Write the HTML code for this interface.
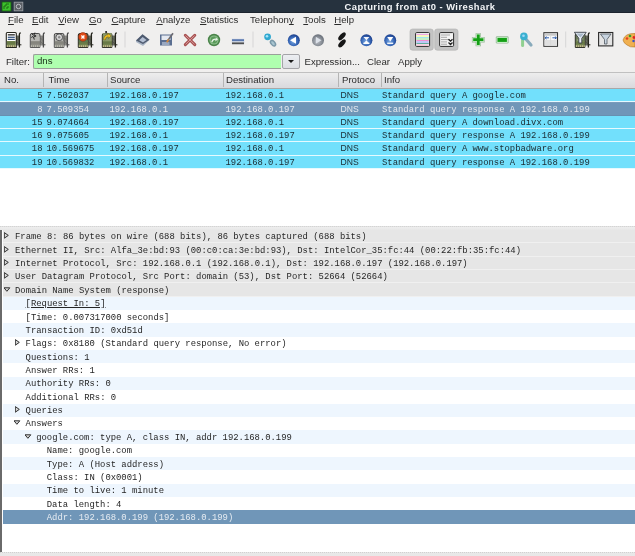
<!DOCTYPE html><html><head><meta charset="utf-8"><style>
*{margin:0;padding:0;box-sizing:border-box}
html,body{width:635px;height:556px;overflow:hidden;background:#f0efee;position:relative}
body{will-change:transform;font-family:"Liberation Sans",sans-serif;color:#2e2e2e}
.a{position:absolute;white-space:pre}
#title{left:0;top:0;width:635px;height:12.8px;background:#26323e;border-bottom:1px solid #1c242e}
#ttext{left:344.5px;top:1px;font-weight:bold;font-size:9.4px;letter-spacing:0.45px;color:#f4f6f8;line-height:11px}
.menu{top:13.8px;font-size:9.6px;line-height:11px;color:#2c2c2c}
.menu u{text-decoration:underline;text-underline-offset:0.5px;text-decoration-skip-ink:none}
.sep{width:1px;background:#d4d4d4;top:32px;height:16px}
.flt{font-size:9.6px;line-height:11px;color:#2c2c2c;top:56px}
#inp{left:33px;top:53.5px;width:248px;height:15.5px;background:#afffaf;border:1px solid #9aa09a;border-right:none;border-radius:2px 0 0 2px}
#drop{left:282px;top:53.8px;width:17.6px;height:15.4px;background:linear-gradient(#eceef2,#dcdee2);border:1px solid #a4a4a8;border-radius:2px}
#hdr{left:0;top:72px;width:635px;height:16.9px;background:linear-gradient(#ededed,#d9d9dd);border-top:1px solid #c0c0c0;border-bottom:1px solid #a8a8a8}
.hd{top:73.5px;font-size:9.6px;line-height:11px;color:#2c2c2c}
.hsep{top:73px;width:1px;height:14px;background:#b4b4b4}
#list{left:0;top:88.9px;width:635px;height:139px;background:#ffffff}
.prow{position:absolute;left:0;width:635px;height:13.33px;background:#72e0fc;border-bottom:1px solid #e6faff}
.prow.sel{background:#7096b8;color:#e4e8ee;border-top:1px solid #7a9cbc;border-bottom:1px solid #6890b0}
.m{font-family:"Liberation Mono",monospace;font-size:8.9px;line-height:13px;position:absolute;top:1px;white-space:pre;color:#1a2a30}
.sel .m{color:#e6eaf0}
#split1{left:0;top:226px;width:635px;height:4.5px;background:linear-gradient(#eeeeee,#e8e8e8 70%,#dedede);border-top:1px dotted #d4d4d4}
#det{left:0;top:230px;width:635px;height:322px;background:#fff;border-left:2px solid #6a6a6a}
.drow{position:absolute;left:1px;width:632px;height:13.36px}
.g{background:#e6e6e6;border-bottom:1px solid #f0f0f0}
.lb{background:#eef6fe}
.w{background:#ffffff}
.dsel{background:#7096b8}
.dt{font-family:"Liberation Mono",monospace;font-size:8.9px;line-height:13px;position:absolute;top:1.5px;white-space:pre;color:#262626}
.dsel .dt{color:#e6ecf2}
.tri{position:absolute}
#split2{left:0;top:552px;width:635px;height:4px;background:#e8e8e8;border-top:1px dotted #d0d0d0}
</style></head><body>
<div class="a" id="title"></div>
<svg class="a" style="left:0;top:0" width="26" height="13" viewBox="0 0 26 13"><rect x="2" y="2" width="9" height="9" fill="#3cc02c" stroke="#1a5a12" stroke-width="0.8"/><path d="M4 9 L4 6 L6 6 L6 4 L9 4 M7 9 L7 7 L9 7" stroke="#1e6a14" stroke-width="1" fill="none"/><rect x="14.2" y="2.2" width="8.6" height="8.6" fill="#5a5e64" stroke="#9a9ea4" stroke-width="0.9"/><circle cx="18.5" cy="6.5" r="2.2" fill="none" stroke="#c8ccd2" stroke-width="0.9"/></svg>
<div class="a" id="ttext">Capturing from at0 - Wireshark</div>
<div class="a menu" style="left:8px"><u>F</u>ile</div>
<div class="a menu" style="left:32px"><u>E</u>dit</div>
<div class="a menu" style="left:58.3px"><u>V</u>iew</div>
<div class="a menu" style="left:89px"><u>G</u>o</div>
<div class="a menu" style="left:111.4px"><u>C</u>apture</div>
<div class="a menu" style="left:156.3px"><u>A</u>nalyze</div>
<div class="a menu" style="left:200px"><u>S</u>tatistics</div>
<div class="a menu" style="left:250px">Telephon<u>y</u></div>
<div class="a menu" style="left:303.3px"><u>T</u>ools</div>
<div class="a menu" style="left:334.3px"><u>H</u>elp</div>
<svg class="a" style="left:0;top:26px" width="635" height="28" viewBox="0 26 635 28"><rect x="15.7" y="35.5" width="3.4" height="10" fill="#666a5e"/>
<path d="M16.5 38 L18.9 40.5 M16.5 41.5 L18.9 44" stroke="#4a4e40" stroke-width="0.7"/>
<path d="M19.4 47.6 V34 Q19.4 33 20.8 32.8" fill="none" stroke="#26261e" stroke-width="1.3"/>
<path d="M18.8 44.8 H21.4" stroke="#26261e" stroke-width="1"/>
<path d="M6.3 47.4 V33.6 Q6.3 32.5 7.4 32.5 H15.2 Q16.3 32.5 16.3 33.6 V47.4 Z" fill="#ffffff" stroke="#26261e" stroke-width="1.1"/>
<rect x="6.85" y="41" width="8.9" height="6" fill="#72844e"/>
<rect x="6.85" y="45.3" width="8.9" height="1.6" fill="#c8c490"/>
<rect x="8.0" y="45.3" width="0.8" height="1.6" fill="#26261e" opacity="0.5"/>
<rect x="10.1" y="45.3" width="0.8" height="1.6" fill="#26261e" opacity="0.5"/>
<rect x="12.2" y="45.3" width="0.8" height="1.6" fill="#26261e" opacity="0.5"/>
<rect x="14.3" y="45.3" width="0.8" height="1.6" fill="#26261e" opacity="0.5"/>
<rect x="6.85" y="42.6" width="8.9" height="0.7" fill="#26261e" opacity="0.3"/>
<rect x="7.8" y="34" width="7" height="1.6" fill="#505050"/>
<rect x="7.8" y="36.7" width="7" height="1.1" fill="#1a3a6a"/>
<rect x="7.8" y="38.8" width="7" height="1.1" fill="#1a3a6a"/>
<rect x="39.7" y="35.5" width="3.4" height="10" fill="#8a8a86"/>
<path d="M40.5 38 L42.9 40.5 M40.5 41.5 L42.9 44" stroke="#6a6a66" stroke-width="0.7"/>
<path d="M43.4 47.6 V34 Q43.4 33 44.8 32.8" fill="none" stroke="#4a4a4a" stroke-width="1.3"/>
<path d="M42.8 44.8 H45.4" stroke="#4a4a4a" stroke-width="1"/>
<path d="M30.3 47.4 V35 Q30.3 33.5 31.8 33.5 H38.8 Q39.9 33.5 39.9 35 V47.4 Z" fill="#b8b8b4" stroke="#4a4a4a" stroke-width="1"/>
<rect x="30.85" y="41" width="8.9" height="6" fill="#8e8e86"/>
<rect x="30.85" y="45.3" width="8.9" height="1.6" fill="#c0c0b4"/>
<rect x="32.0" y="45.3" width="0.8" height="1.6" fill="#4a4a4a" opacity="0.5"/>
<rect x="34.1" y="45.3" width="0.8" height="1.6" fill="#4a4a4a" opacity="0.5"/>
<rect x="36.2" y="45.3" width="0.8" height="1.6" fill="#4a4a4a" opacity="0.5"/>
<rect x="38.3" y="45.3" width="0.8" height="1.6" fill="#4a4a4a" opacity="0.5"/>
<rect x="30.85" y="42.6" width="8.9" height="0.7" fill="#4a4a4a" opacity="0.3"/>
<rect x="30.85" y="36.5" width="8.9" height="4.5" fill="#b8b8b4"/>
<path d="M31.5 33.4 L33.7 35.6 M34.9 32.6 L33.9 35 L36.1 36 L33.5 37 L34.3 39.6 M31.3 37.5 L33.1 36.3" fill="none" stroke="#2a2a2a" stroke-width="1"/>
<rect x="63.699999999999996" y="35.5" width="3.4" height="10" fill="#8a8a86"/>
<path d="M64.5 38 L66.89999999999999 40.5 M64.5 41.5 L66.89999999999999 44" stroke="#6a6a66" stroke-width="0.7"/>
<path d="M67.4 47.6 V34 Q67.4 33 68.8 32.8" fill="none" stroke="#4a4a4a" stroke-width="1.3"/>
<path d="M66.8 44.8 H69.4" stroke="#4a4a4a" stroke-width="1"/>
<path d="M54.3 47.4 V35 Q54.3 33.5 55.8 33.5 H62.8 Q63.9 33.5 63.9 35 V47.4 Z" fill="#b8b8b4" stroke="#4a4a4a" stroke-width="1"/>
<rect x="54.849999999999994" y="41" width="8.9" height="6" fill="#8e8e86"/>
<rect x="54.849999999999994" y="45.3" width="8.9" height="1.6" fill="#c0c0b4"/>
<rect x="56.0" y="45.3" width="0.8" height="1.6" fill="#4a4a4a" opacity="0.5"/>
<rect x="58.1" y="45.3" width="0.8" height="1.6" fill="#4a4a4a" opacity="0.5"/>
<rect x="60.2" y="45.3" width="0.8" height="1.6" fill="#4a4a4a" opacity="0.5"/>
<rect x="62.3" y="45.3" width="0.8" height="1.6" fill="#4a4a4a" opacity="0.5"/>
<rect x="54.849999999999994" y="42.6" width="8.9" height="0.7" fill="#4a4a4a" opacity="0.3"/>
<circle cx="59.199999999999996" cy="37.3" r="3.4" fill="#d4d4d4" stroke="#4a4a4a" stroke-width="0.9"/>
<circle cx="59.199999999999996" cy="37.3" r="1.2" fill="#8a8a8a"/>
<rect x="87.7" y="35.5" width="3.4" height="10" fill="#666a5e"/>
<path d="M88.5 38 L90.89999999999999 40.5 M88.5 41.5 L90.89999999999999 44" stroke="#4a4e40" stroke-width="0.7"/>
<path d="M91.4 47.6 V34 Q91.4 33 92.8 32.8" fill="none" stroke="#26261e" stroke-width="1.3"/>
<path d="M90.8 44.8 H93.4" stroke="#26261e" stroke-width="1"/>
<path d="M78.3 47.4 V35 Q78.3 33.5 79.8 33.5 H86.8 Q87.89999999999999 33.5 87.89999999999999 35 V47.4 Z" fill="#7a8a60" stroke="#26261e" stroke-width="1"/>
<rect x="78.85" y="41" width="8.9" height="6" fill="#72844e"/>
<rect x="78.85" y="45.3" width="8.9" height="1.6" fill="#c8c490"/>
<rect x="80.0" y="45.3" width="0.8" height="1.6" fill="#26261e" opacity="0.5"/>
<rect x="82.1" y="45.3" width="0.8" height="1.6" fill="#26261e" opacity="0.5"/>
<rect x="84.2" y="45.3" width="0.8" height="1.6" fill="#26261e" opacity="0.5"/>
<rect x="86.3" y="45.3" width="0.8" height="1.6" fill="#26261e" opacity="0.5"/>
<rect x="78.85" y="42.6" width="8.9" height="0.7" fill="#26261e" opacity="0.3"/>
<rect x="78.85" y="40" width="8.9" height="2" fill="#5a7a50"/>
<circle cx="82.89999999999999" cy="36.9" r="4.3" fill="#e04c18" stroke="#8a2a10" stroke-width="0.6"/>
<path d="M81.39999999999999 35.4 L84.39999999999999 38.4 M84.39999999999999 35.4 L81.39999999999999 38.4" stroke="#ffffff" stroke-width="1.4"/>
<rect x="111.7" y="35.5" width="3.4" height="10" fill="#666a5e"/>
<path d="M112.5 38 L114.89999999999999 40.5 M112.5 41.5 L114.89999999999999 44" stroke="#4a4e40" stroke-width="0.7"/>
<path d="M115.4 47.6 V34 Q115.4 33 116.8 32.8" fill="none" stroke="#26261e" stroke-width="1.3"/>
<path d="M114.8 44.8 H117.4" stroke="#26261e" stroke-width="1"/>
<path d="M102.3 47.4 V35 Q102.3 33.5 103.8 33.5 H110.8 Q111.89999999999999 33.5 111.89999999999999 35 V47.4 Z" fill="#7a8a60" stroke="#26261e" stroke-width="1"/>
<rect x="102.85" y="41" width="8.9" height="6" fill="#72844e"/>
<rect x="102.85" y="45.3" width="8.9" height="1.6" fill="#c8c490"/>
<rect x="104.0" y="45.3" width="0.8" height="1.6" fill="#26261e" opacity="0.5"/>
<rect x="106.1" y="45.3" width="0.8" height="1.6" fill="#26261e" opacity="0.5"/>
<rect x="108.2" y="45.3" width="0.8" height="1.6" fill="#26261e" opacity="0.5"/>
<rect x="110.3" y="45.3" width="0.8" height="1.6" fill="#26261e" opacity="0.5"/>
<rect x="102.85" y="42.6" width="8.9" height="0.7" fill="#26261e" opacity="0.3"/>
<rect x="102.85" y="33.1" width="8.9" height="7.9" fill="#8a9868"/>
<path d="M103.5 39.5 Q104.3 34.5 108.1 34.8 L107.5 33 L111.1 35.8 L108.5 38.6 L108.3 36.8 Q105.8 36.5 105.3 40 Z" fill="#f0c020" stroke="#6a5a18" stroke-width="0.5"/>
<rect x="105.3" y="31" width="1.6" height="2.2" fill="#222"/>
<rect x="124.5" y="31.5" width="1" height="16" fill="#d6d6d6"/>
<rect x="252.5" y="31.5" width="1" height="16" fill="#d6d6d6"/>
<rect x="565.2" y="31.5" width="1" height="16" fill="#d6d6d6"/>
<g><path d="M136 40.5 L142.5 34.2 L149.5 39.8 L143 46 L136 42 Z" fill="#a8b4c4"/><path d="M136 40.5 L142.5 34.2 L149.5 39.8 L143 44 Z" fill="#4e5a6e"/><path d="M139.2 40.3 L142.6 37 L146.6 39.9 L143 42.4 Z" fill="#b4c0d4"/></g>
<g><rect x="160" y="34.5" width="12" height="11" fill="#5a6e90"/><rect x="161.5" y="35.5" width="9" height="4.5" fill="#e4e8f0"/><rect x="162" y="42" width="7.5" height="3" fill="#9aa8c0"/><path d="M173 33.2 L167.5 41" stroke="#6a6a70" stroke-width="1.6"/><path d="M168.6 39.6 L166.8 42.3" stroke="#d08840" stroke-width="1.8"/></g>
<g><path d="M185.3 35.3 L194.8 44.6 M194.8 35.3 L185.3 44.6" stroke="#a85050" stroke-width="3" stroke-linecap="round"/><path d="M185.8 35.8 L194.3 44.1 M194.3 35.8 L185.8 44.1" stroke="#d49a9a" stroke-width="1" stroke-linecap="round"/></g>
<circle cx="214" cy="40" r="6.2" fill="#4a844a"/><circle cx="214" cy="40" r="4.6" fill="#8cc08c"/><circle cx="214" cy="40" r="3.4" fill="#5a9a5a"/><path d="M211.2 42 Q212.2 38.2 216.2 38.6 L215.6 37 L218 39.6 L215 41.4 L215.6 39.9 Q213.2 39.6 212.3 42.4 Z" fill="#e8f4e8"/>
<rect x="231.5" y="38.6" width="13" height="6" rx="1" fill="#dde2ea"/><rect x="232" y="39.2" width="12" height="2" fill="#5a78b0"/><rect x="232" y="42.4" width="12" height="1.8" fill="#505050"/>
<defs><radialGradient id="gb" cx="0.45" cy="0.6" r="0.6"><stop offset="0" stop-color="#7aa8e0"/><stop offset="0.6" stop-color="#3868b8"/><stop offset="1" stop-color="#1a3c88"/></radialGradient><radialGradient id="gg" cx="0.45" cy="0.6" r="0.6"><stop offset="0" stop-color="#b8bcc4"/><stop offset="0.6" stop-color="#8a9098"/><stop offset="1" stop-color="#686e78"/></radialGradient></defs>
<ellipse cx="273" cy="43.2" rx="2.6" ry="4" transform="rotate(-40 273 43.2)" fill="#7a98a8"/><ellipse cx="273" cy="43.2" rx="1.2" ry="2.4" transform="rotate(-40 273 43.2)" fill="#a8c4d0"/><circle cx="267.6" cy="36.8" r="3.4" fill="#30a8d0"/><circle cx="267" cy="36.2" r="1.3" fill="#a8e4f8"/>
<circle cx="293.8" cy="40.3" r="6" fill="url(#gb)"/><path d="M290 40.3 L296 36.8 L296 43.8 Z" fill="#ffffff"/>
<circle cx="318" cy="40.3" r="6" fill="url(#gg)"/><path d="M321.5 40.3 L315.8 36.8 L315.8 43.8 Z" fill="#dde2ea"/>
<ellipse cx="342" cy="36.3" rx="4.9" ry="2.3" transform="rotate(-48 342 36.3)" fill="#161616"/><ellipse cx="342" cy="43.4" rx="4.9" ry="2.3" transform="rotate(-48 342 43.4)" fill="#161616"/>
<circle cx="366.4" cy="40.3" r="6" fill="url(#gb)"/><path d="M363.4 37 H369.4 L366.4 40.3 Z M363.4 43.8 H369.4 L366.4 40.3 Z" fill="#ffffff" opacity="0.95"/><rect x="363.4" y="42.6" width="6" height="1.3" fill="#ffffff"/>
<circle cx="390.2" cy="40.3" r="6" fill="url(#gb)"/><path d="M387.2 37 H393.2 L390.2 41.5 Z" fill="#ffffff"/><rect x="387.2" y="42.6" width="6" height="1.3" fill="#ffffff"/>
<rect x="410" y="29" width="23.3" height="21.2" rx="2.5" fill="#c4c4c4" stroke="#b0b0b0" stroke-width="0.6"/>
<rect x="434.7" y="29" width="23.3" height="21.2" rx="2.5" fill="#c4c4c4" stroke="#b0b0b0" stroke-width="0.6"/>
<rect x="415.6" y="32.6" width="14" height="13.8" rx="1" fill="#ffffff" stroke="#2a2a2a" stroke-width="1"/>
<rect x="416.4" y="34.0" width="12.4" height="1" fill="#f0a8e8"/>
<rect x="416.4" y="35.5" width="12.4" height="1" fill="#f0f080"/>
<rect x="416.4" y="37.0" width="12.4" height="1" fill="#a0e8f0"/>
<rect x="416.4" y="38.5" width="12.4" height="1" fill="#90e090"/>
<rect x="416.4" y="40.0" width="12.4" height="1" fill="#f090d0"/>
<rect x="416.4" y="41.5" width="12.4" height="1" fill="#8090f0"/>
<rect x="416.4" y="43.0" width="12.4" height="1" fill="#60b0a0"/>
<rect x="416.4" y="44.5" width="12.4" height="1" fill="#f0a8c0"/>
<rect x="439.6" y="32.6" width="14" height="13.8" rx="1" fill="#f4f4f4" stroke="#2a2a2a" stroke-width="1"/>
<rect x="441" y="34.5" width="9" height="1" fill="#a8a8a8"/><rect x="441" y="36.8" width="6" height="1" fill="#a8a8a8"/><rect x="441" y="39.1" width="9" height="1" fill="#a8a8a8"/><rect x="441" y="41.4" width="6" height="1" fill="#a8a8a8"/><rect x="441" y="43.7" width="6" height="1" fill="#a8a8a8"/>
<path d="M448.5 39.2 L450.5 41.2 L452.5 39.2 M448.5 42.5 L450.5 44.5 L452.5 42.5" fill="none" stroke="#222" stroke-width="1.3"/>
<path d="M478.3 33.3 V46.2 M471.9 39.7 H484.7" stroke="#98b898" stroke-width="5.4"/><path d="M478.3 33.8 V45.7 M472.4 39.7 H484.2" stroke="#c8ecc8" stroke-width="4.2"/><path d="M478.3 34.6 V44.9 M473.2 39.7 H483.4" stroke="#14a014" stroke-width="2.8"/>
<rect x="495.8" y="36.2" width="12.8" height="7.4" rx="1.4" fill="#98b898"/><rect x="496.5" y="36.9" width="11.4" height="6" rx="1" fill="#c8ecc8"/><rect x="497.5" y="37.9" width="9.4" height="4" fill="#14a014"/>
<path d="M524.5 37.5 L531 45" stroke="#88aabb" stroke-width="3.2" stroke-linecap="round"/><path d="M522.6 39.5 L522.6 45.5" stroke="#90d090" stroke-width="3" stroke-linecap="round"/><circle cx="523.9" cy="36.4" r="3.8" fill="#3ab0d0"/><circle cx="523.5" cy="35.8" r="1.3" fill="#a0d8f8"/>
<rect x="543.9" y="32.7" width="13.6" height="13.6" fill="#fafafa" stroke="#333" stroke-width="1.1"/><rect x="544.5" y="33.3" width="12.4" height="2.4" fill="#c8c8c8"/><rect x="544.5" y="40" width="12.4" height="5.8" fill="#e0e0e0"/><path d="M545 37.8 H549 M556.4 37.8 H552.4 M546.5 36.6 L545 37.8 L546.5 39 M554.9 36.6 L556.4 37.8 L554.9 39" stroke="#3060b0" stroke-width="1" fill="none"/><path d="M550.7 36 V46" stroke="#d8d8d8" stroke-width="1"/>
<rect x="584.6999999999999" y="35.5" width="3.4" height="10" fill="#666a5e"/>
<path d="M585.5 38 L587.9 40.5 M585.5 41.5 L587.9 44" stroke="#4a4e40" stroke-width="0.7"/>
<path d="M588.4 47.6 V34 Q588.4 33 589.8 32.8" fill="none" stroke="#26261e" stroke-width="1.3"/>
<path d="M587.8 44.8 H590.4" stroke="#26261e" stroke-width="1"/>
<path d="M575.3 47.4 V35 Q575.3 33.5 576.8 33.5 H583.8 Q584.9 33.5 584.9 35 V47.4 Z" fill="#7a8a60" stroke="#26261e" stroke-width="1"/>
<rect x="575.8499999999999" y="41" width="8.9" height="6" fill="#72844e"/>
<rect x="575.8499999999999" y="45.3" width="8.9" height="1.6" fill="#c8c490"/>
<rect x="577.0" y="45.3" width="0.8" height="1.6" fill="#26261e" opacity="0.5"/>
<rect x="579.1" y="45.3" width="0.8" height="1.6" fill="#26261e" opacity="0.5"/>
<rect x="581.2" y="45.3" width="0.8" height="1.6" fill="#26261e" opacity="0.5"/>
<rect x="583.3" y="45.3" width="0.8" height="1.6" fill="#26261e" opacity="0.5"/>
<rect x="575.8499999999999" y="42.6" width="8.9" height="0.7" fill="#26261e" opacity="0.3"/>
<rect x="575.8499999999999" y="33.1" width="8.9" height="7.9" fill="#6a7a58"/>
<path d="M576.8 40 h2 M580.8 39 h2.5 M577.3 37 h1.5" stroke="#c8d0a0" stroke-width="0.7"/>
<path d="M574.4 32.3 L586.2 32.3 L581.8 38.3 L581.8 43 L578.8 43 L578.8 38.3 Z" fill="#e8eef4" stroke="#3a4048" stroke-width="0.9"/><path d="M576.5 33.5 L584 33.5 L580.5 37.5 Z" fill="#a8b8c8"/>
<rect x="598.6" y="32.5" width="14.2" height="13.4" fill="#e4e4e4" stroke="#2a2a2a" stroke-width="1.1"/><path d="M600.5 34 L611 34 L607 39.5 L607 44 L604.5 44 L604.5 39.5 Z" fill="#c8d4e0" stroke="#505860" stroke-width="0.8"/>
<path d="M623 40 Q625 33 635 33.5 V47 Q630 47.5 627 45 Q623.5 43 623 40 Z" fill="#f0b050" stroke="#b07020" stroke-width="0.6"/><circle cx="630" cy="36" r="1.3" fill="#30a030"/><circle cx="634" cy="37.5" r="1.4" fill="#e02020"/><circle cx="627" cy="38.5" r="1.3" fill="#e84020"/><circle cx="633.5" cy="41" r="1.2" fill="#3050d0"/></svg>
<div class="a flt" style="left:6px">Filter:</div>
<div class="a" id="inp"><div class="a" style="left:3px;top:0.7px;font-size:9.6px;line-height:11px;color:#183018">dns</div></div>
<div class="a" id="drop"><div class="a" style="left:4.5px;top:5.2px;width:0;height:0;border-left:3.2px solid transparent;border-right:3.2px solid transparent;border-top:3.2px solid #1a1a1a"></div></div>
<div class="a flt" style="left:304.5px">Expression...</div>
<div class="a flt" style="left:367px">Clear</div>
<div class="a flt" style="left:398px">Apply</div>
<div class="a" id="hdr"></div>
<div class="a hsep" style="left:43px"></div>
<div class="a hsep" style="left:106.5px"></div>
<div class="a hsep" style="left:222.5px"></div>
<div class="a hsep" style="left:338px"></div>
<div class="a hsep" style="left:380.5px"></div>
<div class="a hd" style="left:4px">No.</div>
<div class="a hd" style="left:48.5px">Time</div>
<div class="a hd" style="left:110px">Source</div>
<div class="a hd" style="left:226px">Destination</div>
<div class="a hd" style="left:342px">Protoco</div>
<div class="a hd" style="left:384px">Info</div>
<div class="a" id="list">
<div class="prow" style="top:0.00px">
<div class="m" style="right:592.5px">5</div>
<div class="m" style="left:46.5px">7.502037</div>
<div class="m" style="left:109.5px">192.168.0.197</div>
<div class="m" style="left:225.5px">192.168.0.1</div>
<div class="m" style="left:340.5px;font-family:'Liberation Sans',sans-serif;font-size:8.6px;top:0.15px">DNS</div>
<div class="m" style="left:382px">Standard query A google.com</div>
</div>
<div class="prow sel" style="top:13.33px">
<div class="m" style="right:592.5px">8</div>
<div class="m" style="left:46.5px">7.509354</div>
<div class="m" style="left:109.5px">192.168.0.1</div>
<div class="m" style="left:225.5px">192.168.0.197</div>
<div class="m" style="left:340.5px;font-family:'Liberation Sans',sans-serif;font-size:8.6px;top:0.15px">DNS</div>
<div class="m" style="left:382px">Standard query response A 192.168.0.199</div>
</div>
<div class="prow" style="top:26.66px">
<div class="m" style="right:592.5px">15</div>
<div class="m" style="left:46.5px">9.074664</div>
<div class="m" style="left:109.5px">192.168.0.197</div>
<div class="m" style="left:225.5px">192.168.0.1</div>
<div class="m" style="left:340.5px;font-family:'Liberation Sans',sans-serif;font-size:8.6px;top:0.15px">DNS</div>
<div class="m" style="left:382px">Standard query A download.divx.com</div>
</div>
<div class="prow" style="top:39.99px">
<div class="m" style="right:592.5px">16</div>
<div class="m" style="left:46.5px">9.075605</div>
<div class="m" style="left:109.5px">192.168.0.1</div>
<div class="m" style="left:225.5px">192.168.0.197</div>
<div class="m" style="left:340.5px;font-family:'Liberation Sans',sans-serif;font-size:8.6px;top:0.15px">DNS</div>
<div class="m" style="left:382px">Standard query response A 192.168.0.199</div>
</div>
<div class="prow" style="top:53.32px">
<div class="m" style="right:592.5px">18</div>
<div class="m" style="left:46.5px">10.569675</div>
<div class="m" style="left:109.5px">192.168.0.197</div>
<div class="m" style="left:225.5px">192.168.0.1</div>
<div class="m" style="left:340.5px;font-family:'Liberation Sans',sans-serif;font-size:8.6px;top:0.15px">DNS</div>
<div class="m" style="left:382px">Standard query A www.stopbadware.org</div>
</div>
<div class="prow" style="top:66.65px">
<div class="m" style="right:592.5px">19</div>
<div class="m" style="left:46.5px">10.569832</div>
<div class="m" style="left:109.5px">192.168.0.1</div>
<div class="m" style="left:225.5px">192.168.0.197</div>
<div class="m" style="left:340.5px;font-family:'Liberation Sans',sans-serif;font-size:8.6px;top:0.15px">DNS</div>
<div class="m" style="left:382px">Standard query response A 192.168.0.199</div>
</div>
</div>
<div class="a" id="split1"></div>
<div class="a" id="det">
<div class="drow g" style="top:-0.10px">
<svg class="tri" style="left:1.3px;top:2.5px" width="6" height="7" viewBox="0 0 6 7"><path d="M0.3 0.6 L4.3 3.4 L0.3 6.2 Z" fill="#d8d8d8" stroke="#303030" stroke-width="1" stroke-linejoin="round"/></svg>
<div class="dt" style="left:12.0px">Frame 8: 86 bytes on wire (688 bits), 86 bytes captured (688 bits)</div>
</div>
<div class="drow g" style="top:13.26px">
<svg class="tri" style="left:1.3px;top:2.5px" width="6" height="7" viewBox="0 0 6 7"><path d="M0.3 0.6 L4.3 3.4 L0.3 6.2 Z" fill="#d8d8d8" stroke="#303030" stroke-width="1" stroke-linejoin="round"/></svg>
<div class="dt" style="left:12.0px">Ethernet II, Src: Alfa_3e:bd:93 (00:c0:ca:3e:bd:93), Dst: IntelCor_35:fc:44 (00:22:fb:35:fc:44)</div>
</div>
<div class="drow g" style="top:26.62px">
<svg class="tri" style="left:1.3px;top:2.5px" width="6" height="7" viewBox="0 0 6 7"><path d="M0.3 0.6 L4.3 3.4 L0.3 6.2 Z" fill="#d8d8d8" stroke="#303030" stroke-width="1" stroke-linejoin="round"/></svg>
<div class="dt" style="left:12.0px">Internet Protocol, Src: 192.168.0.1 (192.168.0.1), Dst: 192.168.0.197 (192.168.0.197)</div>
</div>
<div class="drow g" style="top:39.98px">
<svg class="tri" style="left:1.3px;top:2.5px" width="6" height="7" viewBox="0 0 6 7"><path d="M0.3 0.6 L4.3 3.4 L0.3 6.2 Z" fill="#d8d8d8" stroke="#303030" stroke-width="1" stroke-linejoin="round"/></svg>
<div class="dt" style="left:12.0px">User Datagram Protocol, Src Port: domain (53), Dst Port: 52664 (52664)</div>
</div>
<div class="drow g" style="top:53.34px">
<svg class="tri" style="left:0.8px;top:3.5px" width="7" height="6" viewBox="0 0 7 6"><path d="M0 0.8 L5.8 0.8 L2.9 4.3 Z" fill="#d8d8d8" stroke="#303030" stroke-width="1" stroke-linejoin="round"/></svg>
<div class="dt" style="left:12.0px">Domain Name System (response)</div>
</div>
<div class="drow lb" style="top:66.70px">
<div class="dt" style="left:22.6px"><span style="text-decoration:underline;text-underline-offset:0.5px;text-decoration-thickness:1px">[Request In: 5]</span></div>
</div>
<div class="drow w" style="top:80.06px">
<div class="dt" style="left:22.6px">[Time: 0.007317000 seconds]</div>
</div>
<div class="drow lb" style="top:93.42px">
<div class="dt" style="left:22.6px">Transaction ID: 0xd51d</div>
</div>
<div class="drow w" style="top:106.78px">
<svg class="tri" style="left:11.9px;top:2.5px" width="6" height="7" viewBox="0 0 6 7"><path d="M0.3 0.6 L4.3 3.4 L0.3 6.2 Z" fill="#d8d8d8" stroke="#303030" stroke-width="1" stroke-linejoin="round"/></svg>
<div class="dt" style="left:22.6px">Flags: 0x8180 (Standard query response, No error)</div>
</div>
<div class="drow lb" style="top:120.14px">
<div class="dt" style="left:22.6px">Questions: 1</div>
</div>
<div class="drow w" style="top:133.50px">
<div class="dt" style="left:22.6px">Answer RRs: 1</div>
</div>
<div class="drow lb" style="top:146.86px">
<div class="dt" style="left:22.6px">Authority RRs: 0</div>
</div>
<div class="drow w" style="top:160.22px">
<div class="dt" style="left:22.6px">Additional RRs: 0</div>
</div>
<div class="drow lb" style="top:173.58px">
<svg class="tri" style="left:11.9px;top:2.5px" width="6" height="7" viewBox="0 0 6 7"><path d="M0.3 0.6 L4.3 3.4 L0.3 6.2 Z" fill="#d8d8d8" stroke="#303030" stroke-width="1" stroke-linejoin="round"/></svg>
<div class="dt" style="left:22.6px">Queries</div>
</div>
<div class="drow w" style="top:186.94px">
<svg class="tri" style="left:11.4px;top:3.5px" width="7" height="6" viewBox="0 0 7 6"><path d="M0 0.8 L5.8 0.8 L2.9 4.3 Z" fill="#d8d8d8" stroke="#303030" stroke-width="1" stroke-linejoin="round"/></svg>
<div class="dt" style="left:22.6px">Answers</div>
</div>
<div class="drow lb" style="top:200.30px">
<svg class="tri" style="left:22.0px;top:3.5px" width="7" height="6" viewBox="0 0 7 6"><path d="M0 0.8 L5.8 0.8 L2.9 4.3 Z" fill="#d8d8d8" stroke="#303030" stroke-width="1" stroke-linejoin="round"/></svg>
<div class="dt" style="left:33.2px">google.com: type A, class IN, addr 192.168.0.199</div>
</div>
<div class="drow w" style="top:213.66px">
<div class="dt" style="left:43.8px">Name: google.com</div>
</div>
<div class="drow lb" style="top:227.02px">
<div class="dt" style="left:43.8px">Type: A (Host address)</div>
</div>
<div class="drow w" style="top:240.38px">
<div class="dt" style="left:43.8px">Class: IN (0x0001)</div>
</div>
<div class="drow lb" style="top:253.74px">
<div class="dt" style="left:43.8px">Time to live: 1 minute</div>
</div>
<div class="drow w" style="top:267.10px">
<div class="dt" style="left:43.8px">Data length: 4</div>
</div>
<div class="drow dsel" style="top:280.46px">
<div class="dt" style="left:43.8px">Addr: 192.168.0.199 (192.168.0.199)</div>
</div>
</div>
<div class="a" id="split2"></div>
</body></html>
